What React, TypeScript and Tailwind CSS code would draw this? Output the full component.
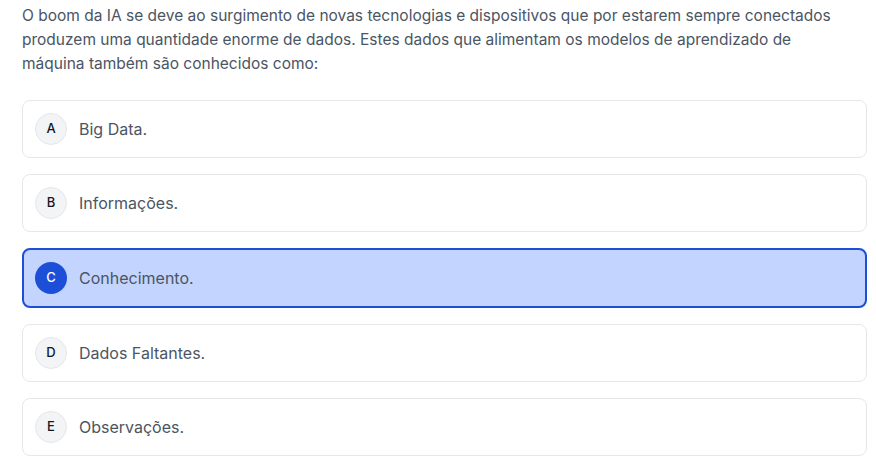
import React, { useState } from 'react';

const options = [
  { key: 'A', label: 'Big Data.' },
  { key: 'B', label: 'Informações.' },
  { key: 'C', label: 'Conhecimento.' },
  { key: 'D', label: 'Dados Faltantes.' },
  { key: 'E', label: 'Observações.' },
];

export default function App() {
  const [selected, setSelected] = useState('C');

  return (
    <div className="min-h-screen bg-white px-[22px] pt-1 font-['Inter','Liberation_Sans',sans-serif] text-[#4b5563]">
      <p className="w-[845px] text-[15.5px] leading-6">
        O boom da IA se deve ao surgimento de novas tecnologias e dispositivos que por estarem sempre conectados
        <br />
        produzem uma quantidade enorme de dados. Estes dados que alimentam os modelos de aprendizado de
        <br />
        máquina também são conhecidos como:
      </p>

      <div className="mt-6 flex w-[845px] flex-col gap-[16.5px]">
        {options.map((opt) => {
          const isSel = opt.key === selected;
          return (
            <button
              key={opt.key}
              onClick={() => setSelected(opt.key)}
              className={`flex items-center gap-3 rounded-lg px-3 text-left ${
                isSel
                  ? 'h-[59.5px] border-2 border-[#1d4ed8] bg-[#c3d4fe] pl-[11px]'
                  : 'h-[57.5px] border border-[#e5e7eb] bg-white'
              }`}
            >
              <span
                className={`flex h-8 w-8 shrink-0 items-center justify-center rounded-full text-[13px] font-medium ${
                  isSel
                    ? 'bg-[#1d4ed8] text-white'
                    : 'border border-[#e5e7eb] bg-[#f3f4f6] text-[#111827]'
                }`}
              >
                {opt.key}
              </span>
              <span className="text-[16px] text-[#4b5563]">{opt.label}</span>
            </button>
          );
        })}
      </div>
    </div>
  );
}
